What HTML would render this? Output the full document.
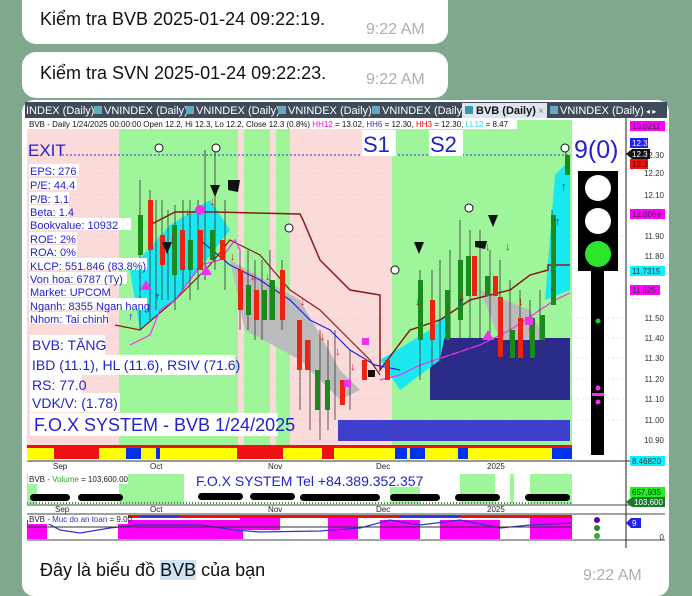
<!DOCTYPE html>
<html><head><meta charset="utf-8"><style>
*{margin:0;padding:0;box-sizing:border-box}
body{width:692px;height:596px;overflow:hidden;background:#7fa88e;font-family:"Liberation Sans",sans-serif;position:relative}
.b{position:absolute;background:#fff;border-radius:14px}
.t{position:absolute;font-size:18px;color:#111}
.tm{position:absolute;font-size:16px;color:#a8b0b6}
svg{position:absolute;left:0;top:0}
</style></head><body>
<div class="b" style="left:22px;top:-14px;width:426px;height:58px"></div>
<div class="t" style="left:40px;top:9px">Kiểm tra BVB 2025-01-24 09:22:19.</div>
<div class="tm" style="left:366px;top:21px">9:22 AM</div>
<div class="b" style="left:22px;top:52px;width:426px;height:46px"></div>
<div class="t" style="left:40px;top:63px">Kiểm tra SVN 2025-01-24 09:22:23.</div>
<div class="tm" style="left:366px;top:71px">9:22 AM</div>
<div class="b" style="left:22px;top:100px;width:647px;height:496px;border-radius:12px"></div>
<div class="t" style="left:40px;top:560px">Đây là biểu đồ <span style="background:#cfe3f3">BVB</span> của bạn</div>
<div class="tm" style="left:583px;top:567px">9:22 AM</div>

<svg width="692" height="596" font-family="Liberation Sans, sans-serif">
<rect x="25" y="102" width="642" height="16" fill="#3f4b59"/>
<g font-size="11" fill="#fff">
<text x="26" y="114">INDEX (Daily)</text>
<rect x="94" y="106" width="8" height="8" fill="#6ab"/><text x="104" y="114">VNINDEX (Daily)</text>
<rect x="186" y="106" width="8" height="8" fill="#6ab"/><text x="196" y="114">VNINDEX (Daily)</text>
<rect x="278" y="106" width="8" height="8" fill="#6ab"/><text x="288" y="114">VNINDEX (Daily)</text>
<rect x="372" y="106" width="8" height="8" fill="#6ab"/><text x="382" y="114">VNINDEX (Daily)</text>
</g>
<rect x="462" y="103" width="85" height="15" fill="#dde6ee"/>
<rect x="465" y="106" width="8" height="8" fill="#39a"/>
<text x="476" y="114" font-size="11" font-weight="bold" fill="#111">BVB (Daily)</text>
<text x="538" y="114" font-size="10" fill="#888">×</text>
<rect x="550" y="106" width="8" height="8" fill="#6ab"/><text x="560" y="114" font-size="11" fill="#fff">VNINDEX (Daily)</text>
<text x="646" y="114" font-size="8" fill="#fff">◂ ▸</text>
<rect x="25" y="118" width="642" height="430" fill="#fff"/>
<rect x="27" y="120" width="545" height="325" fill="#fbdada"/>
<g fill="#9ef59a">
<rect x="119" y="120" width="119" height="325"/>
<rect x="244" y="120" width="26" height="325"/>
<rect x="276" y="120" width="14" height="325"/>
<rect x="392" y="120" width="180" height="325"/>
</g>
<rect x="27" y="119" width="490" height="10" fill="#fff"/>
<text x="29" y="127" font-size="8" fill="#111">BVB - Daily 1/24/2025 00:00:00 Open 12.2, Hi 12.3, Lo 12.2, Close 12.3 (0.8%) <tspan fill="#e0e">HH12</tspan> = 13.02, <tspan fill="#33c">HH6</tspan> = 12.30, <tspan fill="#e00">HH3</tspan> = 12.30, <tspan fill="#3cf">LL12</tspan> = 8.47</text>
<g stroke="#ccc" stroke-dasharray="2 3" stroke-width="0.6">
<line x1="27" y1="173" x2="626" y2="173"/><line x1="27" y1="195" x2="626" y2="195"/><line x1="27" y1="236" x2="626" y2="236"/><line x1="27" y1="256" x2="626" y2="256"/><line x1="27" y1="318" x2="626" y2="318"/><line x1="27" y1="338" x2="626" y2="338"/><line x1="27" y1="358" x2="626" y2="358"/><line x1="27" y1="379" x2="626" y2="379"/><line x1="27" y1="399" x2="626" y2="399"/><line x1="27" y1="420" x2="626" y2="420"/>
</g>
<line x1="62" y1="155" x2="570" y2="155" stroke="#33c" stroke-dasharray="2 2"/>
<rect x="430" y="338" width="140" height="62" fill="#2b2b8c"/>
<rect x="338" y="420" width="232" height="21" fill="#3f3fcc"/>
<path d="M130 270 L170 225 L210 200 L230 230 L175 300 L140 330 Z" fill="#19e8f0"/>
<path d="M380 360 L430 330 L450 310 L440 360 L400 390 Z" fill="#19e8f0"/>
<path d="M555 175 L570 160 L570 290 L545 300 Z" fill="#19e8f0"/>
<path d="M230 260 L300 300 L340 370 L360 390 L340 400 L300 360 L245 330 Z" fill="#bbb"/>
<path d="M480 290 L530 310 L545 340 L500 340 Z" fill="#bbb"/>
<polyline points="150,225 175,212 215,212 255,213 300,214 303,220 320,260 350,290 380,295 380,370 410,330 440,320 470,300 510,290 530,275 548,270 548,265 570,265" fill="none" stroke="#8a1a1a" stroke-width="1.5"/>
<polyline points="115,325 140,330 175,300 210,265 230,240 260,255 290,290 320,310 350,340 370,360 380,375" fill="none" stroke="#8a1a1a" stroke-width="1.2"/>
<polyline points="200,240 230,265 260,280 290,300 310,320 330,330 350,350 375,365 400,370" fill="none" stroke="#22d" stroke-width="1.2"/>
<polyline points="130,345 150,335 160,310 175,300 190,280 200,265 220,260 235,240 240,250" fill="none" stroke="#e3e" stroke-width="1.2"/>
<polyline points="380,380 400,375 420,365 450,355 480,345 510,330 540,310 555,300 570,293" fill="none" stroke="#e3e" stroke-width="1.2"/>
<g stroke="#333" stroke-width="0.8">
<line x1="140" y1="180" x2="140" y2="330"/><line x1="150" y1="190" x2="150" y2="320"/><line x1="156" y1="200" x2="156" y2="310"/><line x1="162" y1="200" x2="162" y2="300"/><line x1="168" y1="210" x2="168" y2="300"/><line x1="175" y1="205" x2="175" y2="310"/><line x1="183" y1="200" x2="183" y2="290"/><line x1="190" y1="200" x2="190" y2="300"/><line x1="198" y1="200" x2="198" y2="290"/><line x1="205" y1="150" x2="205" y2="280"/><line x1="215" y1="150" x2="215" y2="270"/><line x1="225" y1="200" x2="225" y2="290"/><line x1="240" y1="250" x2="240" y2="330"/><line x1="248" y1="250" x2="248" y2="330"/><line x1="255" y1="260" x2="255" y2="340"/><line x1="262" y1="260" x2="262" y2="340"/><line x1="270" y1="250" x2="270" y2="320"/><line x1="282" y1="260" x2="282" y2="330"/><line x1="300" y1="320" x2="300" y2="410"/><line x1="310" y1="340" x2="310" y2="430"/><line x1="320" y1="330" x2="320" y2="440"/><line x1="328" y1="340" x2="328" y2="430"/><line x1="335" y1="330" x2="335" y2="420"/><line x1="350" y1="350" x2="350" y2="410"/><line x1="420" y1="270" x2="420" y2="380"/><line x1="432" y1="270" x2="432" y2="380"/><line x1="440" y1="260" x2="440" y2="370"/><line x1="450" y1="250" x2="450" y2="360"/><line x1="460" y1="220" x2="460" y2="360"/><line x1="470" y1="230" x2="470" y2="350"/><line x1="480" y1="230" x2="480" y2="340"/><line x1="490" y1="250" x2="490" y2="340"/><line x1="500" y1="260" x2="500" y2="350"/><line x1="510" y1="280" x2="510" y2="370"/><line x1="520" y1="290" x2="520" y2="370"/><line x1="530" y1="300" x2="530" y2="370"/><line x1="540" y1="290" x2="540" y2="360"/><line x1="552" y1="210" x2="552" y2="300"/><line x1="566" y1="150" x2="566" y2="175"/>
</g>
<g>
<rect x="138" y="215" width="5" height="40" fill="#1a8a1a"/><rect x="148" y="200" width="5" height="50" fill="#e21"/><rect x="160" y="235" width="5" height="30" fill="#e21"/><rect x="172" y="225" width="5" height="50" fill="#1a8a1a"/><rect x="180" y="230" width="5" height="40" fill="#e21"/><rect x="188" y="240" width="5" height="30" fill="#1a8a1a"/><rect x="198" y="230" width="5" height="40" fill="#e21"/><rect x="210" y="230" width="5" height="30" fill="#1a8a1a"/><rect x="220" y="240" width="5" height="20" fill="#e21"/><rect x="238" y="270" width="5" height="40" fill="#e21"/><rect x="246" y="285" width="5" height="30" fill="#1a8a1a"/><rect x="254" y="290" width="5" height="30" fill="#e21"/><rect x="262" y="290" width="5" height="30" fill="#1a8a1a"/><rect x="270" y="280" width="5" height="40" fill="#1a8a1a"/><rect x="280" y="270" width="5" height="50" fill="#e21"/><rect x="297" y="320" width="5" height="50" fill="#e21"/><rect x="305" y="340" width="5" height="30" fill="#e21"/><rect x="315" y="370" width="5" height="40" fill="#1a8a1a"/><rect x="325" y="380" width="5" height="30" fill="#1a8a1a"/><rect x="340" y="380" width="5" height="25" fill="#e21"/><rect x="362" y="360" width="5" height="20" fill="#e21"/><rect x="385" y="360" width="5" height="20" fill="#e21"/><rect x="418" y="280" width="5" height="60" fill="#1a8a1a"/><rect x="430" y="300" width="5" height="40" fill="#e21"/><rect x="445" y="290" width="5" height="50" fill="#1a8a1a"/><rect x="458" y="260" width="5" height="60" fill="#1a8a1a"/><rect x="466" y="256" width="5" height="40" fill="#1a8a1a"/><rect x="472" y="256" width="5" height="40" fill="#e21"/><rect x="485" y="276" width="5" height="20" fill="#1a8a1a"/><rect x="493" y="276" width="5" height="20" fill="#e21"/><rect x="498" y="297" width="5" height="60" fill="#e21"/><rect x="510" y="330" width="5" height="28" fill="#1a8a1a"/><rect x="518" y="318" width="5" height="40" fill="#e21"/><rect x="530" y="318" width="5" height="40" fill="#1a8a1a"/><rect x="540" y="315" width="5" height="25" fill="#1a8a1a"/><rect x="551" y="215" width="5" height="90" fill="#1a8a1a"/><rect x="565" y="155" width="5" height="20" fill="#1a8a1a"/>
</g>
<g fill="#e11" font-size="11">
<text x="170" y="240">↓</text><text x="185" y="215">↓</text><text x="210" y="205">↓</text><text x="230" y="260">↓</text><text x="250" y="280">↓</text><text x="265" y="280">↓</text><text x="300" y="305">↓</text><text x="320" y="340">↓</text><text x="335" y="355">↓</text><text x="350" y="370">↓</text><text x="415" y="305">↓</text><text x="430" y="310">↓</text><text x="445" y="310">↓</text><text x="460" y="300">↓</text><text x="485" y="250">↓</text><text x="505" y="250">↓</text><text x="518" y="305">↓</text><text x="527" y="330">↓</text>
</g>
<g fill="#22d" font-size="11"><text x="128" y="320">↑</text><text x="155" y="300">↑</text><text x="458" y="305">↑</text><text x="555" y="225">↑</text><text x="561" y="190">↑</text></g>
<g fill="#e3e"><path d="M140 290 l6 -10 l6 10z"/><path d="M200 275 l6 -10 l6 10z"/><path d="M482 340 l6 -10 l6 10z"/><rect x="525" y="317" width="8" height="8"/><rect x="362" y="338" width="7" height="7"/><rect x="344" y="380" width="7" height="7"/><circle cx="200" cy="210" r="5"/></g>
<g fill="#111"><path d="M162 242 l10 0 l-5 12z"/><path d="M210 185 l10 0 l-5 12z"/><path d="M414 242 l10 0 l-5 12z"/><path d="M488 215 l10 0 l-5 12z"/><path d="M228 180 l12 0 l-2 12 l-10 -2z"/><rect x="368" y="370" width="7" height="7"/><path d="M475 241 l12 0 l-2 8 l-10 -2z"/></g>
<g fill="#fff" stroke="#111"><circle cx="159" cy="148" r="4"/><circle cx="216" cy="148" r="4"/><circle cx="289" cy="228" r="4"/><circle cx="469" cy="208" r="4"/><circle cx="395" cy="270" r="4"/><circle cx="565" cy="148" r="4"/></g>
<text x="28" y="156" font-size="17" fill="#22c">EXIT</text>
<rect x="362" y="130" width="34" height="26" fill="#fff"/><text x="363" y="152" font-size="22" fill="#22c">S1</text>
<rect x="429" y="130" width="34" height="26" fill="#fff"/><text x="430" y="152" font-size="22" fill="#22c">S2</text>
<text x="574" y="158" font-size="25" fill="#22c">9(0)</text>
<g font-size="11" fill="#22c">
<rect x="29" y="164" width="50" height="12" fill="#fff"/><text x="30" y="175">EPS: 276</text>
<rect x="29" y="178" width="48" height="12" fill="#fff"/><text x="30" y="189">P/E: 44.4</text>
<rect x="29" y="192" width="40" height="12" fill="#fff"/><text x="30" y="203">P/B: 1.1</text>
<rect x="29" y="205" width="40" height="12" fill="#fff"/><text x="30" y="216">Beta: 1.4</text>
<rect x="29" y="218" width="102" height="12" fill="#fff"/><text x="30" y="229">Bookvalue: 10932</text>
<rect x="29" y="232" width="48" height="12" fill="#fff"/><text x="30" y="243">ROE: 2%</text>
<rect x="29" y="245" width="48" height="12" fill="#fff"/><text x="30" y="256">ROA: 0%</text>
<rect x="29" y="258" width="118" height="12" fill="#fff"/><text x="30" y="270">KLCP: 551.846 (83.8%)</text>
<rect x="29" y="272" width="98" height="12" fill="#fff"/><text x="30" y="283">Von hoa: 6787 (Ty)</text>
<rect x="29" y="285" width="80" height="12" fill="#fff"/><text x="30" y="296">Market: UPCOM</text>
<rect x="29" y="298" width="118" height="12" fill="#fff"/><text x="30" y="310">Nganh: 8355 Ngan hang</text>
<rect x="29" y="312" width="78" height="12" fill="#fff"/><text x="30" y="323">Nhom: Tai chinh</text>
</g>
<g font-size="14" fill="#22c">
<rect x="30" y="335" width="75" height="20" fill="#fff"/><text x="32" y="350">BVB: TĂNG</text>
<rect x="30" y="355" width="205" height="20" fill="#fff"/><text x="32" y="370">IBD (11.1), HL (11.6), RSIV (71.6)</text>
<rect x="30" y="375" width="52" height="19" fill="#fff"/><text x="32" y="390">RS: 77.0</text>
<rect x="30" y="393" width="90" height="19" fill="#fff"/><text x="32" y="408">VDK/V:  (1.78)</text>
<rect x="30" y="413" width="248" height="23" fill="#fff"/><text x="34" y="431" font-size="18">F.O.X SYSTEM - BVB 1/24/2025</text>
</g>
<rect x="578" y="171" width="40" height="100" fill="#000"/>
<rect x="591" y="271" width="13" height="184" fill="#000"/>
<circle cx="598" cy="188" r="13" fill="#fff"/><circle cx="598" cy="221" r="13" fill="#fff"/><circle cx="598" cy="254" r="13" fill="#2ee52e"/>
<circle cx="598" cy="321" r="2.5" fill="#2c2"/><circle cx="598" cy="388" r="2.5" fill="#e3e"/><rect x="592" y="393" width="12" height="3" fill="#e3e"/><circle cx="598" cy="402" r="2.5" fill="#e3e"/>
<rect x="27" y="445" width="545" height="14" fill="#ff0"/>
<g fill="#e11"><rect x="27" y="445" width="545" height="3"/><rect x="54" y="448" width="45" height="11"/><rect x="237" y="448" width="45" height="11"/><rect x="322" y="448" width="12" height="11"/><rect x="265" y="448" width="18" height="11"/></g>
<g fill="#03e"><rect x="126" y="448" width="15" height="11"/><rect x="156" y="448" width="4" height="11"/><rect x="395" y="448" width="12" height="11"/><rect x="410" y="448" width="15" height="11"/><rect x="458" y="448" width="10" height="11"/><rect x="552" y="448" width="20" height="11"/></g>
<line x1="27" y1="461" x2="665" y2="461" stroke="#333"/>
<g font-size="8" fill="#222"><text x="53" y="469">Sep</text><text x="150" y="469">Oct</text><text x="268" y="469">Nov</text><text x="376" y="469">Dec</text><text x="487" y="469">2025</text></g>
<g fill="#9ef59a"><rect x="27" y="474" width="10" height="30"/><rect x="119" y="474" width="65" height="30"/><rect x="390" y="487" width="30" height="17"/><rect x="460" y="474" width="35" height="30"/><rect x="510" y="474" width="4" height="30"/><rect x="530" y="474" width="42" height="30"/></g>
<rect x="28" y="474" width="100" height="10" fill="#fff"/>
<text x="29" y="482" font-size="8" fill="#222">BVB - <tspan fill="#2a2">Volume</tspan> = 103,600.00</text>
<text x="196" y="486" font-size="14" fill="#22c">F.O.X SYSTEM Tel +84.389.352.357</text>
<g fill="#000"><rect x="30" y="494" width="40" height="7" rx="3.5"/><rect x="78" y="494" width="45" height="7" rx="3.5"/><rect x="198" y="493" width="45" height="7" rx="3.5"/><rect x="250" y="493" width="45" height="7" rx="3.5"/><rect x="300" y="494" width="80" height="7" rx="3.5"/><rect x="390" y="494" width="50" height="7" rx="3.5"/><rect x="455" y="494" width="45" height="7" rx="3.5"/><rect x="525" y="494" width="45" height="7" rx="3.5"/></g>
<line x1="27" y1="503" x2="572" y2="503" stroke="#2a2" stroke-dasharray="1 2" stroke-width="2"/>
<line x1="27" y1="505" x2="665" y2="505" stroke="#444"/>
<g font-size="8" fill="#222"><text x="55" y="512">Sep</text><text x="150" y="512">Oct</text><text x="268" y="512">Nov</text><text x="376" y="512">Dec</text><text x="487" y="512">2025</text></g>
<line x1="27" y1="514" x2="665" y2="514" stroke="#444"/>
<g fill="#f0f"><rect x="27" y="520" width="20" height="19"/><rect x="118" y="520" width="125" height="19"/><rect x="240" y="516" width="40" height="14"/><rect x="328" y="518" width="30" height="21"/><rect x="380" y="520" width="40" height="19"/><rect x="440" y="520" width="60" height="19"/><rect x="530" y="516" width="42" height="23"/></g>
<rect x="118" y="515" width="454" height="3" fill="#e11"/>
<rect x="140" y="515" width="40" height="3" fill="#33e"/><rect x="400" y="515" width="60" height="3" fill="#33e"/>
<polyline points="27,521 47,523 60,530 80,533 110,528 135,525 175,525 200,525 235,530 260,532 320,531 360,528 390,520 420,525 460,520 500,528 530,525 572,523" fill="none" stroke="#33c" stroke-width="1.2"/>
<line x1="27" y1="527" x2="572" y2="527" stroke="#333"/>
<rect x="28" y="515" width="100" height="9" fill="#fff"/>
<text x="29" y="522" font-size="8" fill="#222">BVB - <tspan fill="#33c">Muc do an toan</tspan> = 9.00</text>
<circle cx="597" cy="520" r="3" fill="#609"/><circle cx="597" cy="528" r="3" fill="#283"/><circle cx="597" cy="536" r="3" fill="#3a3"/>
<line x1="27" y1="540" x2="665" y2="540" stroke="#444"/>
<line x1="626" y1="118" x2="626" y2="548" stroke="#222"/>
<g font-size="8" fill="#333" text-anchor="end"><text x="664" y="130">12.40</text><text x="664" y="158">12.30</text><text x="664" y="176">12.20</text><text x="664" y="198">12.10</text><text x="664" y="239">11.90</text><text x="664" y="259">11.80</text><text x="664" y="321">11.50</text><text x="664" y="341">11.40</text><text x="664" y="361">11.30</text><text x="664" y="382">11.20</text><text x="664" y="402">11.10</text><text x="664" y="423">11.00</text><text x="664" y="443">10.90</text><text x="664" y="540">0</text></g>
<g font-size="8" fill="#fff"><rect x="630" y="121" width="35" height="10" fill="#f0f"/><text x="632" y="129" fill="#333">13.0211</text>
<rect x="630" y="138" width="18" height="10" fill="#22e"/><text x="632" y="146">12.3</text>
<path d="M626 154 l6 -5 h18 v10 h-18z" fill="#111"/><text x="632" y="157">12.3</text>
<rect x="630" y="159" width="18" height="10" fill="#e11"/><text x="632" y="167" fill="#600">12.3</text>
<rect x="630" y="209" width="35" height="10" fill="#f0f"/><text x="632" y="217" fill="#333">12.0069</text>
<rect x="630" y="266" width="35" height="10" fill="#1ef"/><text x="632" y="274" fill="#333">11.7315</text>
<rect x="630" y="285" width="30" height="10" fill="#f0f"/><text x="632" y="293" fill="#333">11.625</text>
<rect x="630" y="456" width="35" height="10" fill="#1ef"/><text x="632" y="464" fill="#333">8.46820</text>
<rect x="630" y="487" width="35" height="10" fill="#2e2"/><text x="632" y="495" fill="#030">657,935</text>
<path d="M626 502 l6 -5 h33 v10 h-33z" fill="#1a7a2a"/><text x="634" y="505">103,600</text>
<path d="M626 523 l5 -5 h10 v10 h-10z" fill="#22e"/><text x="632" y="526">9</text></g>
</svg>
</body></html>
